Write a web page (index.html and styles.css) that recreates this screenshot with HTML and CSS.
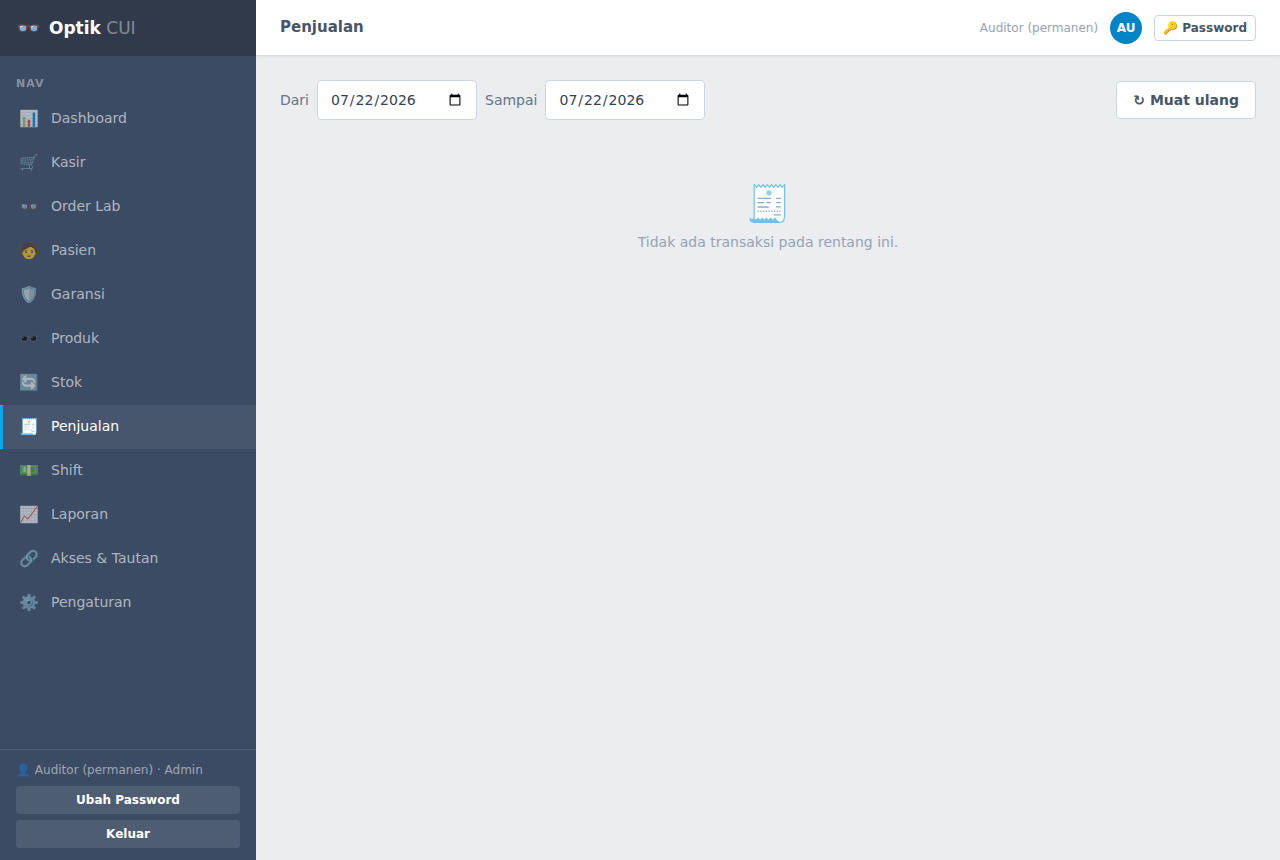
FILE: index.html
```html
<!DOCTYPE html>
<html lang="id">
<head>
    <meta charset="UTF-8">
    <meta name="viewport" content="width=device-width, initial-scale=1.0">
    <title>Optik CUI</title>
    <link rel="stylesheet" href="styles.css">
</head>
<body>
    <aside class="sidebar">
        <div class="brand">
            <span class="brand-icon">👓</span>
            <span class="brand-name"><b>Optik</b> <span class="brand-sub">CUI</span></span>
        </div>
        <nav class="nav">
            <div class="nav-title">NAV</div>
            <a href="#dashboard"><span class="ic">📊</span>Dashboard</a>
            <a href="#kasir"><span class="ic">🛒</span>Kasir</a>
            <a href="#lab"><span class="ic">👓</span>Order Lab</a>
            <a href="#pasien"><span class="ic">🧑</span>Pasien</a>
            <a href="#garansi"><span class="ic">🛡️</span>Garansi</a>
            <a href="#produk"><span class="ic">🕶️</span>Produk</a>
            <a href="#stok"><span class="ic">🔄</span>Stok</a>
            <a href="#penjualan" class="active"><span class="ic">🧾</span>Penjualan</a>
            <a href="#shift"><span class="ic">💵</span>Shift</a>
            <a href="#laporan"><span class="ic">📈</span>Laporan</a>
            <a href="#akses"><span class="ic">🔗</span>Akses &amp; Tautan</a>
            <a href="#pengaturan"><span class="ic">⚙️</span>Pengaturan</a>
        </nav>
        <div class="side-foot">
            <div class="who">👤 Auditor (permanen) · Admin</div>
            <button type="button">Ubah Password</button>
            <button type="button">Keluar</button>
        </div>
    </aside>
    <div class="main">
        <header class="topbar">
            <h1>Penjualan</h1>
            <div class="user">
                <span class="user-name">Auditor (permanen)</span>
                <span class="avatar">AU</span>
                <button type="button" class="btn btn-sm">🔑 Password</button>
            </div>
        </header>
        <main class="content">
            <div class="toolbar">
                <label for="dari">Dari</label>
                <input type="date" id="dari" value="2026-07-22">
                <label for="sampai">Sampai</label>
                <input type="date" id="sampai" value="2026-07-22">
                <button type="button" class="btn reload">↻ Muat ulang</button>
            </div>
            <div class="empty">
                <div class="empty-icon">🧾</div>
                <div>Tidak ada transaksi pada rentang ini.</div>
            </div>
        </main>
    </div>
</body>
</html>
```

FILE: styles.css
```css
* {
    box-sizing: border-box;
}

body {
    margin: 0;
    display: flex;
    min-height: 100vh;
    background: #ebedef;
    color: #3c4b64;
    font-family: "DejaVu Sans", sans-serif;
    font-size: 14px;
    line-height: 21px;
}

button, input {
    font-family: inherit;
}

button {
    cursor: pointer;
}

/* sidebar */
.sidebar {
    width: 256px;
    flex-shrink: 0;
    display: flex;
    flex-direction: column;
    background: #3c4b64;
    color: #fff;
}

.brand {
    height: 56px;
    padding: 0 16px;
    display: flex;
    align-items: center;
    gap: 8px;
    background: #303a4b;
    font-size: 17px;
    line-height: 26px;
}

.brand-icon {
    font-size: 20px;
}

.brand-sub {
    opacity: .4;
}

.nav {
    flex: 1;
    padding: 8px 0;
}

.nav-title {
    padding: 12px 16px 5px;
    font-size: 11px;
    line-height: 16px;
    font-weight: bold;
    letter-spacing: 1px;
    color: rgba(255, 255, 255, .4);
}

.nav a {
    display: flex;
    align-items: center;
    gap: 12px;
    height: 44px;
    padding: 11px 16px 12px;
    border-left: 3px solid transparent;
    color: rgba(255, 255, 255, .6);
    text-decoration: none;
}

.nav a.active {
    background: rgba(255, 255, 255, .06);
    border-left-color: #0ea5e9;
    color: #fff;
}

.ic {
    width: 20px;
    text-align: center;
    font-size: 16px;
}

.side-foot {
    padding: 11px 16px 12px;
    border-top: 1px solid rgba(255, 255, 255, .1);
    display: flex;
    flex-direction: column;
    gap: 6px;
}

.who {
    margin-bottom: 1px;
    font-size: 12px;
    line-height: 18px;
    color: rgba(255, 255, 255, .5);
}

.side-foot button {
    height: 28px;
    border: 0;
    border-radius: 4px;
    background: rgba(255, 255, 255, .1);
    color: #fff;
    font-size: 12px;
    font-weight: bold;
}

/* main area */
.main {
    flex: 1;
    min-width: 0;
}

.topbar {
    height: 56px;
    padding: 0 24px;
    display: flex;
    align-items: center;
    justify-content: space-between;
    background: #fff;
    border-bottom: 1px solid #d8dbe0;
    box-shadow: 0 1px 2px rgba(0, 0, 0, .05);
}

.topbar h1 {
    margin: 0;
    font-size: 15px;
    color: #475569;
}

.user {
    display: flex;
    align-items: center;
    gap: 12px;
    line-height: 18px;
}

.user-name {
    font-size: 12px;
    color: #94a3b8;
}

.avatar {
    width: 32px;
    height: 32px;
    display: flex;
    align-items: center;
    justify-content: center;
    border-radius: 50%;
    background: #0284c7;
    color: #fff;
    font-size: 12px;
    font-weight: bold;
}

.btn {
    height: 38px;
    padding: 0 16px;
    border: 1px solid #cbd5e1;
    border-radius: 4px;
    background: #fff;
    color: #475569;
    font-size: 14px;
    font-weight: bold;
}

.btn-sm {
    height: 26px;
    padding: 0 8px;
    font-size: 12px;
}

.content {
    padding: 24px;
}

.toolbar {
    display: flex;
    align-items: center;
    gap: 8px;
}

.toolbar label {
    color: #64748b;
}

.toolbar input {
    width: 160px;
    height: 40px;
    padding: 0 12px;
    border: 1px solid #cbd5e1;
    border-radius: 4px;
    background: #fff;
    color: #334155;
    font-size: 14px;
}

.reload {
    margin-left: auto;
}

.empty {
    padding: 56px 16px;
    text-align: center;
    color: #94a3b8;
}

.empty-icon {
    font-size: 36px;
    line-height: 56px;
}
```
